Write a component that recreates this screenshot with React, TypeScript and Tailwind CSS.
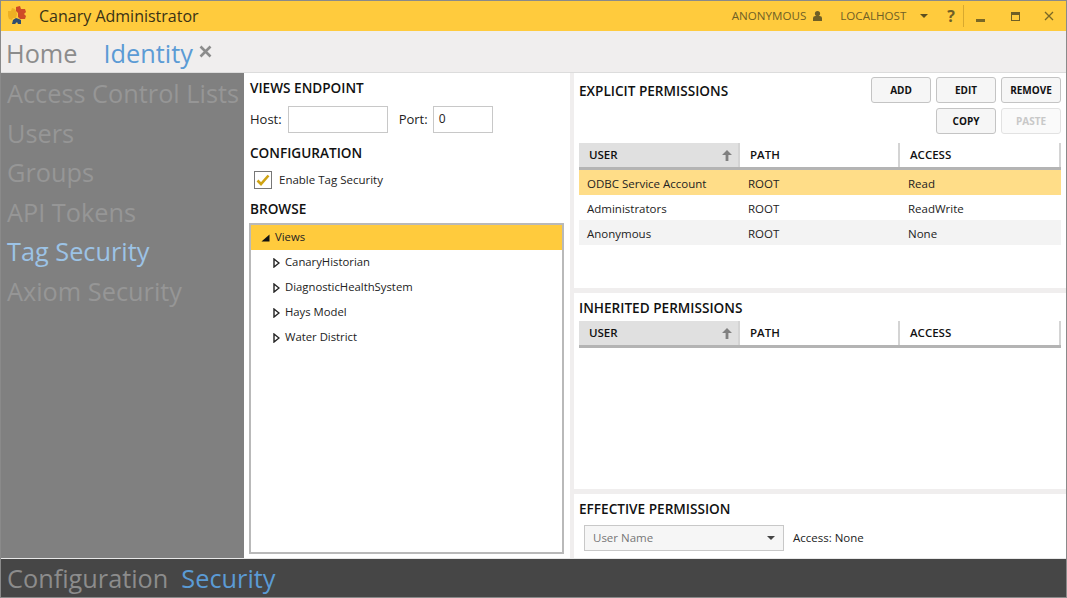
const font = { fontFamily: '"Open Sans", "Noto Sans", sans-serif' };

const navItems = ["Access Control Lists", "Users", "Groups", "API Tokens", "Tag Security", "Axiom Security"];

const explicitRows = [
  { user: "ODBC Service Account", path: "ROOT", access: "Read", cls: "bg-[#ffdd88]" },
  { user: "Administrators", path: "ROOT", access: "ReadWrite", cls: "bg-white" },
  { user: "Anonymous", path: "ROOT", access: "None", cls: "bg-[#f3f3f3]" },
];

function Logo() {
  return (
    <svg width="20" height="20" viewBox="0 0 20 20" className="shrink-0">
      <path d="M0 5 L3 5 L4 2 L7 3 L8 5 L9 8 L8 12 L5 12 L4 14 L1 13 L0 10 Z" fill="#eeb023" />
      <path d="M8 1 L12 0 L13 3 L17 3 L18 6 L16 8 L18 10 L17 13 L12 13 L10 11 L10 7 L8 5 Z" fill="#cf4b26" />
      <path d="M5 14 L8 12 L11 13 L13 14 L13 18 L10 18 L9 16 L7 18 L4 18 Z" fill="#2f4d6e" />
    </svg>
  );
}

function SectionTitle({ children, className = "" }: { children: string; className?: string }) {
  return <h2 className={`text-[13.6px] leading-5 font-semibold text-[#111] ${className}`}>{children}</h2>;
}

function ActionButton({ label, disabled }: { label: string; disabled?: boolean }) {
  return (
    <button
      className={`w-[60px] h-[26px] rounded-[3px] border text-[10px] font-bold ${
        disabled ? "border-[#e2e2e2] bg-[#fafafa] text-[#c8c8c8]" : "border-[#c4c4c4] bg-[#f6f6f6] text-[#111]"
      }`}
    >
      {label}
    </button>
  );
}

function GridHeader() {
  return (
    <div className="flex h-[27px] border-b-[3px] border-[#b4b4b4] text-[11.5px] font-semibold text-[#111]">
      <div className="w-[159px] flex items-center justify-between bg-[#e0e0e0] pl-[10px] pr-[6px]">
        <span>USER</span>
        <svg width="10" height="11" viewBox="0 0 10 11">
          <path d="M5 0 L10 5 L6.4 5 L6.4 11 L3.6 11 L3.6 5 L0 5 Z" fill="#808080" />
        </svg>
      </div>
      <div className="w-[160px] flex items-center border-l-2 border-[#d4d4d4] pl-[10px]">PATH</div>
      <div className="flex-1 flex items-center border-x-2 border-[#d4d4d4] pl-[10px]">ACCESS</div>
    </div>
  );
}

function TreeChild({ label }: { label: string }) {
  return (
    <div className="flex items-center h-[25px] pl-[22px] text-[11.3px] text-[#222]">
      <svg width="7" height="10" viewBox="0 0 7 10" className="mr-[5px]">
        <path d="M1 1 L6 5 L1 9 Z" fill="#fff" stroke="#222" strokeWidth="1.4" />
      </svg>
      {label}
    </div>
  );
}

export default function App() {
  return (
    <div className="w-[1067px] h-[598px] flex flex-col overflow-hidden border border-[#8a8a8a] bg-[#f0eeee]" style={font}>
      {/* title bar */}
      <div className="h-[30px] shrink-0 flex items-center bg-[#ffcb3d] pl-[7px] pr-[12px]">
        <Logo />
        <span className="ml-[11px] text-[16px] text-[#3a3216]">Canary Administrator</span>
        <div className="ml-auto flex items-center text-[11.6px] text-[#6f5f26]">
          <span>ANONYMOUS</span>
          <svg width="9" height="10" viewBox="0 0 9 10" className="ml-[7px]">
            <circle cx="4.5" cy="2.6" r="2.6" fill="#6f5f26" />
            <path d="M0 10 V7 Q0 5 2.5 5 H6.5 Q9 5 9 7 V10 Z" fill="#6f5f26" />
          </svg>
          <span className="ml-[18px]">LOCALHOST</span>
          <svg width="8" height="4" viewBox="0 0 8 4" className="ml-[14px]">
            <path d="M0 0 H8 L4 4 Z" fill="#5c4f20" />
          </svg>
          <span className="ml-[19px] text-[16px] font-bold leading-none">?</span>
          <div className="ml-[8px] w-px h-[22px] bg-[#d8a92e]" />
          <div className="ml-[12px] mt-[9px] w-[9px] h-[3px] bg-[#7a6826]" />
          <div className="ml-[26px] w-[9px] h-[9px] border border-t-[3px] border-[#6f5f26]" />
          <svg width="10" height="10" viewBox="0 0 10 10" className="ml-[24px]">
            <path d="M1 1 L9 9 M9 1 L1 9" stroke="#7a6826" strokeWidth="1.3" />
          </svg>
        </div>
      </div>

      {/* tab bar */}
      <div className="h-[42px] shrink-0 flex items-center pl-[5px] pt-[4px] border-b border-[#dcdcdc] text-[25.3px]">
        <span className="text-[#8c8c8c]">Home</span>
        <span className="ml-[26px] text-[#5b9bd5]">Identity</span>
        <svg width="13" height="13" viewBox="0 0 13 13" className="ml-[6px] -mt-[4px]">
          <path d="M1.5 1.5 L11.5 11.5 M11.5 1.5 L1.5 11.5" stroke="#8c8c8c" strokeWidth="2.6" />
        </svg>
      </div>

      <div className="flex-1 min-h-0 flex">
        {/* left nav */}
        <nav className="w-[243px] shrink-0 bg-[#808080] pl-[6px] pt-[1px] text-[25.3px] leading-[39.6px] text-[#969696] whitespace-nowrap">
          {navItems.map((item) => (
            <div key={item} className={item === "Tag Security" ? "text-[#9cc3e6]" : ""}>
              {item}
            </div>
          ))}
        </nav>

        {/* middle panel */}
        <div className="w-[326px] shrink-0 flex flex-col bg-white pl-[5px] pr-[6px] pt-[5px] pb-[4px] text-[#222]">
          <SectionTitle className="ml-px">VIEWS ENDPOINT</SectionTitle>
          <div className="mt-[8px] ml-px flex items-center text-[13px]">
            <span>Host:</span>
            <div className="ml-[6px] w-[100px] h-[27px] border border-[#c8c8c8]" />
            <span className="ml-[11px]">Port:</span>
            <div className="ml-[5px] w-[60px] h-[27px] border border-[#c8c8c8] pl-[5px] text-[12px] leading-[24px]">0</div>
          </div>
          <SectionTitle className="mt-[10px] ml-px">CONFIGURATION</SectionTitle>
          <div className="mt-[8px] ml-[5px] flex items-center text-[11.5px]">
            <div className="w-[18px] h-[18px] border border-[#777] flex items-center justify-center">
              <svg width="14" height="12" viewBox="0 0 14 12">
                <path d="M1.5 6.5 L5 10 L12.5 1.5" fill="none" stroke="#cfa313" strokeWidth="2.6" />
              </svg>
            </div>
            <span className="ml-[7px]">Enable Tag Security</span>
          </div>
          <SectionTitle className="mt-[10px] ml-px">BROWSE</SectionTitle>
          <div className="mt-[4px] flex-1 border-2 border-[#b9b9b9]">
            <div className="flex items-center h-[25px] bg-[#ffcb3d] pl-[10px] text-[11.3px]">
              <svg width="9" height="8" viewBox="0 0 9 8" className="mr-[5px]">
                <path d="M8.5 0.5 V7.5 H0.5 Z" fill="#111" />
              </svg>
              Views
            </div>
            {["CanaryHistorian", "DiagnosticHealthSystem", "Hays Model", "Water District"].map((t) => (
              <TreeChild key={t} label={t} />
            ))}
          </div>
        </div>

        {/* right column */}
        <div className="flex-1 min-w-0 flex flex-col gap-[5px] pl-[4px]">
          <section className="h-[215px] shrink-0 bg-white px-[5px]">
            <div className="flex justify-between pt-[4px]">
              <SectionTitle className="mt-[4px]">EXPLICIT PERMISSIONS</SectionTitle>
              <div className="flex flex-col items-end gap-[5px]">
                <div className="flex gap-[5px]">
                  <ActionButton label="ADD" />
                  <ActionButton label="EDIT" />
                  <ActionButton label="REMOVE" />
                </div>
                <div className="flex gap-[5px]">
                  <ActionButton label="COPY" />
                  <ActionButton label="PASTE" disabled />
                </div>
              </div>
            </div>
            <div className="mt-[9px]">
              <GridHeader />
              {explicitRows.map((r) => (
                <div key={r.user} className={`flex h-[25px] items-center pt-[2px] text-[11.5px] text-[#222] ${r.cls}`}>
                  <div className="w-[161px] pl-[8px]">{r.user}</div>
                  <div className="w-[160px] pl-[8px]">{r.path}</div>
                  <div className="pl-[8px]">{r.access}</div>
                </div>
              ))}
            </div>
          </section>

          <section className="h-[196px] shrink-0 bg-white px-[5px] pt-[5px]">
            <SectionTitle>INHERITED PERMISSIONS</SectionTitle>
            <div className="mt-[3px]">
              <GridHeader />
            </div>
          </section>

          <section className="flex-1 bg-white pl-[5px] pt-[5px]">
            <SectionTitle>EFFECTIVE PERMISSION</SectionTitle>
            <div className="mt-[6px] ml-[5px] flex items-center text-[11.5px]">
              <div className="w-[200px] h-[26px] flex items-center justify-between border border-[#c8c8c8] bg-[#f6f6f6] px-[8px] text-[#777]">
                <span>User Name</span>
                <svg width="8" height="4" viewBox="0 0 8 4">
                  <path d="M0 0 H8 L4 4 Z" fill="#444" />
                </svg>
              </div>
              <span className="ml-[9px] text-[#222]">Access: None</span>
            </div>
          </section>
        </div>
      </div>

      {/* bottom bar */}
      <div className="h-[39px] shrink-0 flex items-center border-t border-[#e8e8e8] bg-[#464646] pl-[6px] pt-[2px] text-[25.3px]">
        <span className="text-[#8c8c8c]">Configuration</span>
        <span className="ml-[13px] text-[#5b9bd5]">Security</span>
      </div>
    </div>
  );
}
